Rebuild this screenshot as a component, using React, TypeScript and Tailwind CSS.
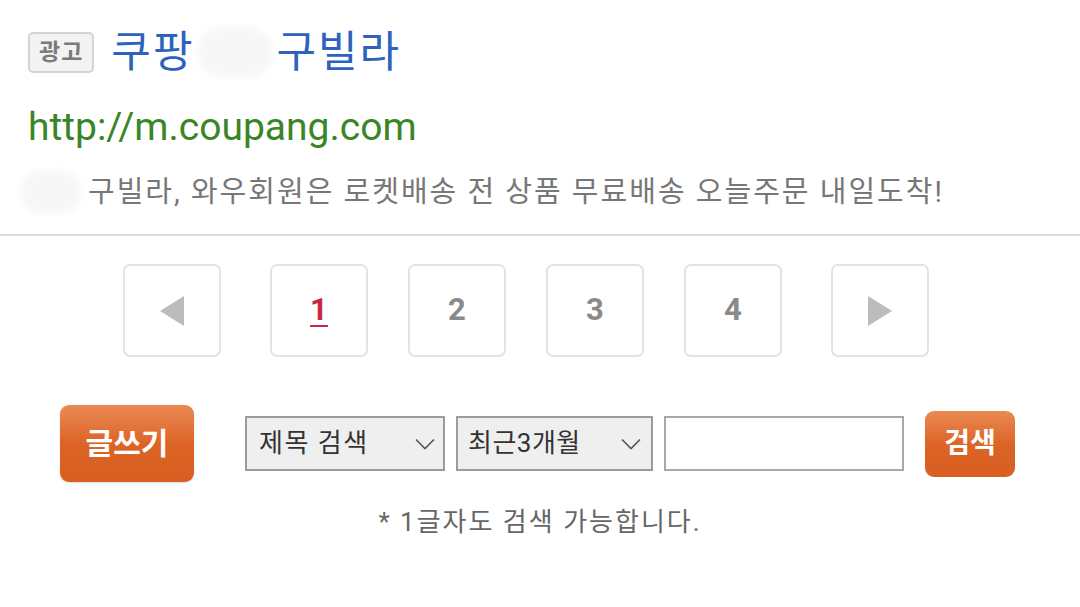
import React from "react";

const Chevron = () => (
    <svg width="20" height="12" viewBox="0 0 20 12" fill="none" className="shrink-0">
        <polyline points="1,1.5 10,10.5 19,1.5" stroke="#555" strokeWidth="1.6" />
    </svg>
);

const Arrow = ({ dir }: { dir: "left" | "right" }) => (
    <svg width="24" height="30" viewBox="0 0 24 30">
        {dir === "left" ? (
            <polygon points="24,0 24,30 0,15" fill="#bcbcbc" />
        ) : (
            <polygon points="0,0 0,30 24,15" fill="#bcbcbc" />
        )}
    </svg>
);

const PageBox = ({ children }: { children: React.ReactNode }) => (
    <div className="flex h-[93px] w-[98px] items-center justify-center rounded-[7px] border-2 border-[#e3e3e3] bg-white">
        {children}
    </div>
);

const Blob = ({ w, h }: { w: number; h: number }) => (
    <span
        className="inline-block rounded-full bg-[#f7f7f7] blur-[3px]"
        style={{ width: w, height: h }}
    />
);

export default function App() {
    const pages = [1, 2, 3, 4];
    const current = 1;

    return (
        <div className="h-[607px] w-[1080px] overflow-hidden bg-white font-['Roboto','Noto_Sans_CJK_KR',sans-serif]">
            {/* Ad block */}
            <div className="px-[28px] pt-[28px]">
                <div className="flex h-[48px] items-center">
                    <span className="flex h-[41px] items-center rounded-[5px] border-2 border-[#d4d4d4] bg-[#f3f3f3] px-[9px] text-[23px] font-bold leading-none tracking-[1px] text-[#7a7a7a]">
                        광고
                    </span>
                    <span className="ml-[17px] flex items-center text-[43px] leading-none tracking-[2px] text-[#2d62bd]">
                        쿠팡
                        <span className="mx-[3px] flex items-center">
                            <Blob w={76} h={50} />
                        </span>
                        구빌라
                    </span>
                </div>
                <div className="mt-[29px] text-[39px] leading-[44px] text-[#3a8526]">
                    http://m.coupang.com
                </div>
                <div className="mt-[23px] flex h-[40px] items-center">
                    <span className="-ml-[8px] mr-[6px] flex items-center">
                        <Blob w={62} h={44} />
                    </span>
                    <span className="text-[29px] leading-none tracking-[2px] text-[#777]">
                        구빌라, 와우회원은 로켓배송 전 상품 무료배송 오늘주문 내일도착!
                    </span>
                </div>
            </div>

            <div className="mt-[22px] border-t-2 border-[#dedede]" />

            {/* Pagination */}
            <div className="mt-[28px] flex items-center pl-[123px]">
                <PageBox>
                    <Arrow dir="left" />
                </PageBox>
                <div className="ml-[49px] flex gap-[40px]">
                    {pages.map((p) => (
                        <PageBox key={p}>
                            <span
                                className={`text-[31px] font-bold ${
                                    p === current
                                        ? "text-[#c8283f] underline decoration-2 underline-offset-[5px]"
                                        : "text-[#8a8a8a]"
                                }`}
                            >
                                {p}
                            </span>
                        </PageBox>
                    ))}
                </div>
                <div className="ml-[49px]">
                    <PageBox>
                        <Arrow dir="right" />
                    </PageBox>
                </div>
            </div>

            {/* Write / search row */}
            <div className="mt-[48px] flex items-center">
                <button className="ml-[60px] flex h-[77px] w-[134px] items-center justify-center rounded-[9px] bg-gradient-to-b from-[#ea8a52] via-[#dc6426] to-[#d85e22] text-[30px] font-bold text-white shadow-[0_1px_2px_rgba(0,0,0,0.15)]">
                    글쓰기
                </button>
                <div className="ml-[51px] flex h-[55px] w-[200px] items-center justify-between border-2 border-[#9c9c9c] bg-[#efefef] pl-[12px] pr-[8px] text-[26px] tracking-[1.5px] text-[#333]">
                    <span>제목 검색</span>
                    <Chevron />
                </div>
                <div className="ml-[11px] flex h-[55px] w-[197px] items-center justify-between border-2 border-[#9c9c9c] bg-[#efefef] pl-[10px] pr-[10px] text-[26px] tracking-[0.5px] text-[#333]">
                    <span>최근3개월</span>
                    <Chevron />
                </div>
                <div className="ml-[11px] h-[55px] w-[240px] border-2 border-[#a8a8a8] bg-white" />
                <button className="ml-[21px] flex h-[66px] w-[90px] items-center justify-center rounded-[9px] bg-gradient-to-b from-[#ea8a52] via-[#dc6426] to-[#d85e22] text-[28px] font-bold text-white">
                    검색
                </button>
            </div>

            <div className="mt-[24px] text-center text-[26px] leading-[32px] tracking-[2px] text-[#666]">
                * 1글자도 검색 가능합니다.
            </div>
        </div>
    );
}
